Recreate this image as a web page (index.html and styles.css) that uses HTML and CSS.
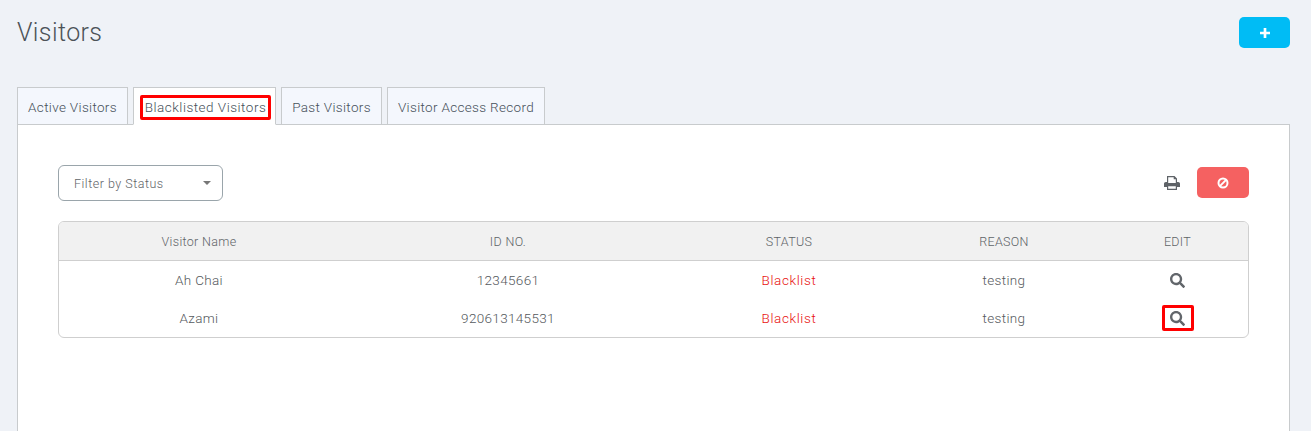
FILE: index.html
```html
<!DOCTYPE html>
<html lang="en">
<head>
<meta charset="utf-8">
<title>Visitors</title>
<link rel="stylesheet" href="styles.css">
</head>
<body>
<header class="page-head">
  <h1 class="page-title">Visitors</h1>
  <button class="btn btn-add" type="button" aria-label="Add">
    <svg class="btn-icon" viewBox="0 0 12 12"><path d="M4.4 0h3.2v4.4H12v3.2H7.600V12H4.400V7.600H0V4.400h4.400z"/></svg>
  </button>
</header>
<nav class="tabs">
  <a class="tab tab-1">Active Visitors</a>
  <a class="tab tab-2 tab-active"><span class="mark mark-tab">Blacklisted Visitors</span></a>
  <a class="tab tab-3">Past Visitors</a>
  <a class="tab tab-4">Visitor Access Record</a>
</nav>
<main class="panel">
  <div class="toolbar">
    <div class="select"><span>Filter by Status</span><i class="caret"></i></div>
    <div class="actions">
      <svg class="print" viewBox="0 0 16 14"><path fill-rule="evenodd" d="M3 0h7.500L13 2.500V6h1.200c1 0 1.800.8 1.800 1.800V11h-3v3H3v-3H0V7.800C0 6.800.8 6 1.800 6H3zm1.200 1.200V7h7.600V3.300H9.700V1.200zM4.200 10.200v2.600h7.600v-2.600z"/></svg>
      <button class="btn btn-ban" type="button" aria-label="Blacklist">
        <svg class="ban-icon" viewBox="0 0 12 12"><circle cx="6" cy="6" r="4.500"/><path d="M2.900 9.100 9.100 2.900"/></svg>
      </button>
    </div>
  </div>
  <div class="table-wrap">
    <table class="table">
      <thead>
        <tr><th class="c1">Visitor Name</th><th class="c2">ID NO.</th><th class="c3">STATUS</th><th class="c4">REASON</th><th class="c5">EDIT</th></tr>
      </thead>
      <tbody>
        <tr>
          <td>Ah Chai</td><td>12345661</td><td class="status">Blacklist</td><td>testing</td>
          <td><span class="icon-box"><svg class="search" viewBox="0 0 512 512"><path d="M505 442.700L405.300 343c-4.500-4.500-10.600-7-17-7H372c27.600-35.300 44-79.700 44-128C416 93.100 322.900 0 208 0S0 93.100 0 208s93.100 208 208 208c48.300 0 92.700-16.400 128-44v16.300c0 6.400 2.500 12.500 7 17l99.700 99.700c9.400 9.400 24.600 9.400 33.900 0l28.300-28.300c9.400-9.400 9.400-24.600.1-34zM208 336c-70.700 0-128-57.200-128-128 0-70.700 57.200-128 128-128 70.700 0 128 57.200 128 128 0 70.700-57.200 128-128 128z"/></svg></span></td>
        </tr>
        <tr>
          <td>Azami</td><td>920613145531</td><td class="status">Blacklist</td><td>testing</td>
          <td><span class="icon-box mark"><svg class="search" viewBox="0 0 512 512"><path d="M505 442.700L405.300 343c-4.500-4.500-10.600-7-17-7H372c27.600-35.300 44-79.700 44-128C416 93.100 322.900 0 208 0S0 93.100 0 208s93.100 208 208 208c48.300 0 92.700-16.400 128-44v16.300c0 6.400 2.500 12.500 7 17l99.700 99.700c9.400 9.400 24.600 9.400 33.900 0l28.300-28.300c9.400-9.400 9.400-24.600.1-34zM208 336c-70.700 0-128-57.200-128-128 0-70.700 57.200-128 128-128 70.700 0 128 57.200 128 128 0 70.700-57.200 128-128 128z"/></svg></span></td>
        </tr>
      </tbody>
    </table>
  </div>
</main>
</body>
</html>
```
FILE: styles.css
```css
* { box-sizing: border-box; }
html, body { height: 431px; overflow: hidden; }
body {
  margin: 0;
  padding: 0 21px 0 17px;
  background: #eff2f7;
  font-family: "Roboto", "Liberation Sans", sans-serif;
  font-size: 13.500px;
  font-weight: 300;
  letter-spacing: .33px;
  color: #55595d;
  display: flex;
  flex-direction: column;
}
.page-head {
  display: flex;
  justify-content: space-between;
  align-items: flex-start;
  height: 87px;
  padding-top: 17px;
}
.page-title {
  margin: 0;
  font-size: 25px;
  line-height: 31px;
  font-weight: 300;
  letter-spacing: .4px;
  color: #4c5258;
}
.btn {
  border: 0;
  padding: 0;
  display: flex;
  align-items: center;
  justify-content: center;
  border-radius: 5px;
}
.btn-add { width: 51px; height: 31px; background: #00bcf5; }
.btn-icon { width: 10px; height: 10px; fill: #fff; }
.tabs { display: flex; height: 38px; position: relative; z-index: 1; }
.tab {
  height: 38px;
  display: flex;
  align-items: center;
  justify-content: center;
  padding-top: 1px;
  background: #f4f7fd;
  border: 1px solid #c8cbcd;
  color: #46505a;
}
.tab-1 { width: 111px; }
.tab-2 { width: 143px; margin-left: 5px; }
.tab-3 { width: 101px; margin-left: 5px; }
.tab-4 { width: 158px; margin-left: 5px; }
.tab-active {
  background: #fff;
  border-bottom-color: #fff;
  padding-top: 0;
}
.mark { border: 3px solid #f00; border-radius: 2px; }
.mark-tab {
  display: flex;
  align-items: center;
  justify-content: center;
  width: 131px;
  height: 25px;
  margin: 2px 0 0 2px;
  letter-spacing: .5px;
}
.panel {
  flex: 1;
  margin-top: -1px;
  background: #fff;
  border: 1px solid #c8cbcd;
  border-bottom: 0;
  padding: 40px 40px 0;
}
.toolbar {
  display: flex;
  justify-content: space-between;
  align-items: center;
  height: 36px;
  margin-bottom: 20px;
}
.select {
  width: 165px;
  height: 36px;
  border: 1px solid #9aa5ab;
  border-radius: 6px;
  padding: 0 11px 0 15px;
  display: flex;
  align-items: center;
  justify-content: space-between;
  font-size: 12.500px;
  letter-spacing: .5px;
  color: #5f6468;
}
.caret {
  width: 0;
  height: 0;
  border-left: 4px solid transparent;
  border-right: 4px solid transparent;
  border-top: 4px solid #777;
}
.actions { display: flex; align-items: center; gap: 17px; margin-bottom: 1px; }
.print { width: 16px; height: 14px; fill: #5f6368; }
.btn-ban { width: 52px; height: 31px; background: #f56161; }
.ban-icon { width: 12px; height: 12px; fill: none; stroke: #fff; stroke-width: 2; }
.table-wrap {
  border: 1px solid #cfcfcf;
  border-radius: 6px;
  overflow: hidden;
}
.table {
  width: 100%;
  border-collapse: separate;
  border-spacing: 0;
  table-layout: fixed;
  text-align: center;
}
.table th {
  height: 39px;
  font-weight: 300;
  font-size: 12.500px;
  background: #f1f1f1;
  border-bottom: 1px solid #cfcfcf;
  color: #5f6468;
}
.table td { height: 38px; padding: 0; color: #55595d; }
.c1 { width: 280px; }
.c2 { width: 338px; }
.c3 { width: 224px; }
.c4 { width: 206px; }
.c5 { width: auto; }
.table td.status { color: #e8110f; letter-spacing: .6px; }
.icon-box {
  display: inline-flex;
  align-items: center;
  justify-content: center;
  width: 32px;
  height: 26px;
  vertical-align: middle;
}
.search { width: 15px; height: 15px; fill: #62666b; }
```
